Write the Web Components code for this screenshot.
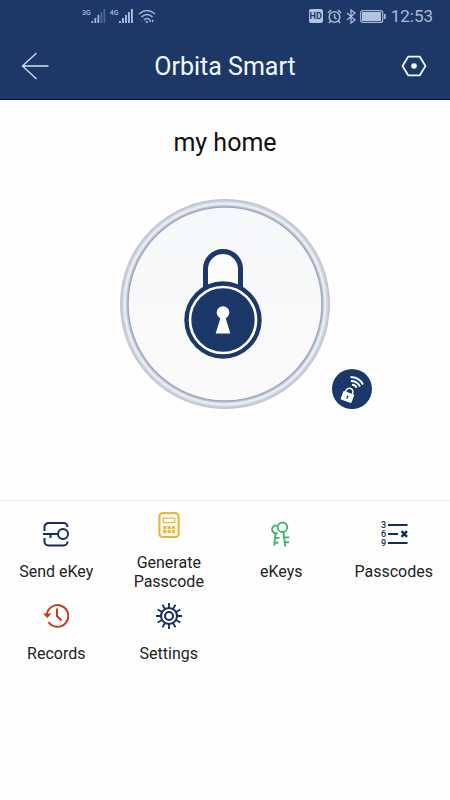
<!DOCTYPE html>
<html lang="en">
<head>
<meta charset="utf-8">
<meta name="viewport" content="width=device-width, initial-scale=1">
<title>Orbita Smart</title>
<style>
  body { margin: 0; background: #fefefe; color: #1c1c1c; font-family: Roboto, "Liberation Sans", sans-serif; }
</style>
</head>
<body>
<orbita-app></orbita-app>
<script>
const define = (name, html) => {
  const template = document.createElement('template');
  template.innerHTML = html;
  customElements.define(name, class extends HTMLElement {
    constructor() {
      super();
      this.attachShadow({ mode: 'open' }).append(template.content.cloneNode(true));
    }
  });
};

define('status-bar', `
<style>
  :host { display: flex; align-items: center; justify-content: space-between; height: 32px; padding: 0 17px 0 82px; color: #a9bbdc; font-size: 17px; }
  .group { display: flex; align-items: center; gap: 4px; }
  svg { display: block; }
  sup { font-size: 7px; line-height: 8px; font-weight: 500; align-self: flex-start; }
  .signal { display: flex; align-items: center; }
  .hd { background: #b4c3df; color: #1d3866; font-size: 9px; line-height: 14px; font-weight: 700; border-radius: 2px; width: 14px; text-align: center; }
  time { margin-left: 1px; }
</style>
<div class="group">
  <span class="signal"><sup>3G</sup>
    <svg width="15" height="14" viewBox="0 0 14 14" fill="currentColor"><path d="M0 12h1.700v2H0zM3 9h1.700v5H3zM6 6h1.700v8H6z"/><path opacity=".35" d="M9 3h1.700v11H9zM12 0h1.700v14H12z"/></svg>
  </span>
  <span class="signal"><sup>4G</sup>
    <svg width="15" height="14" viewBox="0 0 15 14" fill="currentColor"><path d="M0 12h1.900v2H0zM3 9h1.900v5H3zM6 6h1.900v8H6zM9 3h1.900v11H9zM12 0h1.900v14H12z"/></svg>
  </span>
  <svg width="18" height="15" viewBox="0 0 18 15" fill="none" stroke="currentColor" stroke-width="1.600"><path d="M1 5Q9-2 17 5M3.500 8Q9 3 14.500 8M6 11Q9 8 12 11"/><path d="M7 12l2 2.500 1.500-2zM11 12l2-1.500v3zM14 10.500l2 1.500-2 1.500" fill="currentColor" stroke="none"/></svg>
</div>
<div class="group">
  <span class="hd">HD</span>
  <svg width="15" height="15" viewBox="0 0 15 15" fill="none" stroke="currentColor" stroke-width="1.500"><circle cx="7.500" cy="8" r="5.300"/><path d="M7.500 5v3.300L9.500 10M1 4L4 1M14 4L11 1M3.500 12L2 14M11.500 12L13 14"/></svg>
  <svg width="10" height="15" viewBox="0 0 10 15" fill="none" stroke="currentColor" stroke-width="1.300"><path d="M1 4l8 7-4 3V1l4 3-8 7"/></svg>
  <svg width="26" height="13" viewBox="0 0 26 13"><rect x=".7" y=".7" width="22" height="11.600" rx="2" fill="none" stroke="currentColor" stroke-width="1.200"/><rect x="2" y="2" width="19" height="9" fill="#b4c3df"/><path d="M24.800 4v5" stroke="currentColor" stroke-width="1.800"/></svg>
  <time>12:53</time>
</div>`);

define('title-bar', `
<style>
  :host { display: grid; grid-template-columns: 1fr auto 1fr; align-items: center; height: 68px; padding: 0 21px; border-bottom: 1px solid #06112a; box-sizing: border-box; color: #f2faff; }
  h1 { margin: 0; padding-top: 2px; font-size: 25px; line-height: 30px; font-weight: 400; }
  button { border: 0; padding: 0; background: none; color: inherit; display: block; cursor: pointer; }
  button:last-child { justify-self: end; margin-right: 2px; }
  svg { display: block; fill: none; stroke: currentColor; }
  .back { color: #cfe2fa; }
</style>
<button class="back" aria-label="Back"><svg width="28" height="28" viewBox="0 0 28 28" stroke-width="1.300"><path d="M27.500 14H1.500M15.500 1L1.500 14l14 13"/></svg></button>
<h1><slot></slot></h1>
<button aria-label="Lock options"><svg width="26" height="22" viewBox="0 0 26 22" stroke-width="1.700"><path d="M7.200 1.700h11.600L24.500 11l-5.700 9.300H7.200L1.500 11z"/><circle cx="13" cy="11" r="2.800" fill="currentColor" stroke="none"/></svg></button>`);

define('lock-panel', `
<style>
  :host { display: flex; flex-direction: column; align-items: center; padding: 28px 0 91px; border-bottom: 1px solid #ebebec; }
  h2 { margin: 0 0 41px; color: #111; font-size: 25px; line-height: 30px; font-weight: 400; }
  .dial { position: relative; }
  button { display: block; border: 0; padding: 0; background: none; border-radius: 50%; cursor: pointer; }
  svg { display: block; }
  .remote { position: absolute; right: -42px; bottom: 0; }
</style>
<h2><slot></slot></h2>
<div class="dial">
  <button aria-label="Unlock">
    <svg width="210" height="210" viewBox="0 0 210 210">
      <defs>
        <radialGradient id="rim" gradientUnits="userSpaceOnUse" cx="105" cy="105" r="105">
          <stop offset=".91" stop-color="#fafafb"/><stop offset=".922" stop-color="#98a1b4"/><stop offset=".937" stop-color="#c3cbda"/>
          <stop offset=".953" stop-color="#f0f4fb"/><stop offset=".97" stop-color="#d8dce5"/><stop offset=".987" stop-color="#c3c8d4"/><stop offset="1" stop-color="#bcc1cb"/>
        </radialGradient>
        <linearGradient id="face" x1="0" y1="0" x2="0" y2="1"><stop offset="0" stop-color="#f7f8f9"/><stop offset="1" stop-color="#fafafb"/></linearGradient>
      </defs>
      <circle cx="105" cy="105" r="105" fill="url(#rim)"/>
      <circle cx="105" cy="105" r="96" fill="url(#face)"/>
      <path d="M85.500 93V70a17.500 17.500 0 0 1 35 0v23" fill="#fcfcfc" stroke="#1b3868" stroke-width="5"/>
      <circle cx="103" cy="121" r="38.700" fill="#1b3868"/>
      <circle cx="103" cy="121" r="33" fill="none" stroke="#fff" stroke-width="2.600"/>
      <circle cx="103" cy="113.500" r="6.300" fill="#fff"/>
      <path d="M101 117h4l5.300 17.500H95.700z" fill="#fff"/>
    </svg>
  </button>
  <button class="remote" aria-label="Remote unlock">
    <svg width="40" height="40" viewBox="0 0 40 40">
      <circle cx="20" cy="20" r="20" fill="#1b3868"/>
      <g transform="rotate(20 15.500 27)"><rect x="10" y="23.500" width="11.500" height="9" rx=".7" fill="#fff"/><path d="M12.200 24v-1.500a3.600 3.600 0 0 1 7.200 0V24" fill="none" stroke="#fff" stroke-width="1.500"/><circle cx="15.800" cy="27.500" r="1" fill="#1b3868"/><path d="M15.800 27.500v2.500" stroke="#1b3868"/></g>
      <g fill="none" stroke="#fff" stroke-width="1.900"><path d="M18.500 8Q27 8 31 15.500M19 12Q25 12 28 17.500"/><path d="M20 15.800q3.500 0 4.500 3"/></g>
    </svg>
  </button>
</div>`);

define('action-grid', `
<style>
  :host { display: grid; grid-template-columns: repeat(4, 1fr); grid-auto-rows: minmax(82px, auto); padding: 9px 0; }
</style>
<slot></slot>`);

define('action-tile', `
<style>
  :host { display: flex; }
  button { flex: 1; display: flex; flex-direction: column; align-items: center; justify-content: center; gap: 15px; border: 0; padding: 0 8px; background: none; color: #222; font-family: inherit; font-size: 16px; line-height: 19px; cursor: pointer; }
</style>
<button><slot name="icon"></slot><span><slot></slot></span></button>`);

define('orbita-app', `
<style>
  :host { display: block; }
  header { background: #1d3866; }
  svg { display: block; fill: none; stroke-width: 2; }
  .navy { stroke: #142c58; }
</style>
<header>
  <status-bar></status-bar>
  <title-bar>Orbita Smart</title-bar>
</header>
<main>
  <lock-panel>my home</lock-panel>
  <action-grid>
    <action-tile>
      <svg slot="icon" class="navy" width="26" height="26" viewBox="0 0 26 26" aria-hidden="true"><path d="M1.500 10V6a4 4 0 0 1 4-4h15a4 4 0 0 1 4 4M1.500 17v3.500a4 4 0 0 0 4 4h15a4 4 0 0 0 4-4M0 13H15M7.500 13v4"/><circle cx="20" cy="13" r="5"/></svg>
      Send eKey
    </action-tile>
    <action-tile>
      <svg slot="icon" width="26" height="26" viewBox="0 0 26 27" stroke="#e5bb3d" aria-hidden="true"><rect x="3" y="1.200" width="20" height="24.800" rx="3.500" stroke-width="2.300"/><rect x="7" y="6.300" width="12" height="4.700" stroke-width="1.300"/><path d="M6.900 16.200h12.400M6.900 20.400h12.400" stroke-width="3.300" stroke-dasharray="3.400 1.100"/></svg>
      Generate Passcode
    </action-tile>
    <action-tile>
      <svg slot="icon" width="26" height="26" viewBox="0 0 26 27" stroke="#45b36b" stroke-width="2.200" aria-hidden="true"><circle cx="14.500" cy="6.500" r="5"/><path d="M15.500 11.500L17.500 26.500M16.800 17h5M17.300 22h4M8.500 4.800a4 4 0 1 0 1 7.500M7.300 12.500L6 25.500M7 17.500h4.500M6.500 22.500h4"/></svg>
      eKeys
    </action-tile>
    <action-tile>
      <svg slot="icon" class="navy" width="28" height="26" viewBox="0 0 28 26" aria-hidden="true"><path d="M8 4h19.500M8 13h10M8 22h19.500"/><path d="M21.500 10.200l5.500 5.600M27 10.200l-5.500 5.600" stroke-width="2.400"/><g fill="#142c58" stroke="none" font-size="9" font-weight="500" font-family="Roboto, sans-serif"><text x="1" y="7">3</text><text x="1" y="16">6</text><text x="1" y="25">9</text></g></svg>
      Passcodes
    </action-tile>
    <action-tile>
      <svg slot="icon" width="26" height="26" viewBox="0 0 26 26" stroke="#cc3917" aria-hidden="true"><path d="M3.700 12A10.800 10.800 0 1 1 5.500 19M14 5.500V13l4.500 4.500"/><path d="M0 10.500h8.500L4.300 15z" fill="#cc3917" stroke="none"/></svg>
      Records
    </action-tile>
    <action-tile>
      <svg slot="icon" class="navy" width="28" height="26" viewBox="0 0 28 26" aria-hidden="true"><circle cx="14" cy="13" r="8"/><circle cx="14" cy="13" r="4"/><path d="M14 5V0M14 21v5M6 13H1M22 13h5M10 6.100L7.500 1.700M18 6.100l2.500-4.400M10 19.900l-2.500 4.400M18 19.900l2.500 4.400M7.100 9L2.700 6.500M20.900 9l4.400-2.500M7.100 17l-4.400 2.500M20.900 17l4.400 2.500" stroke-width="1.800"/></svg>
      Settings
    </action-tile>
  </action-grid>
</main>`);
</script>
</body>
</html>
